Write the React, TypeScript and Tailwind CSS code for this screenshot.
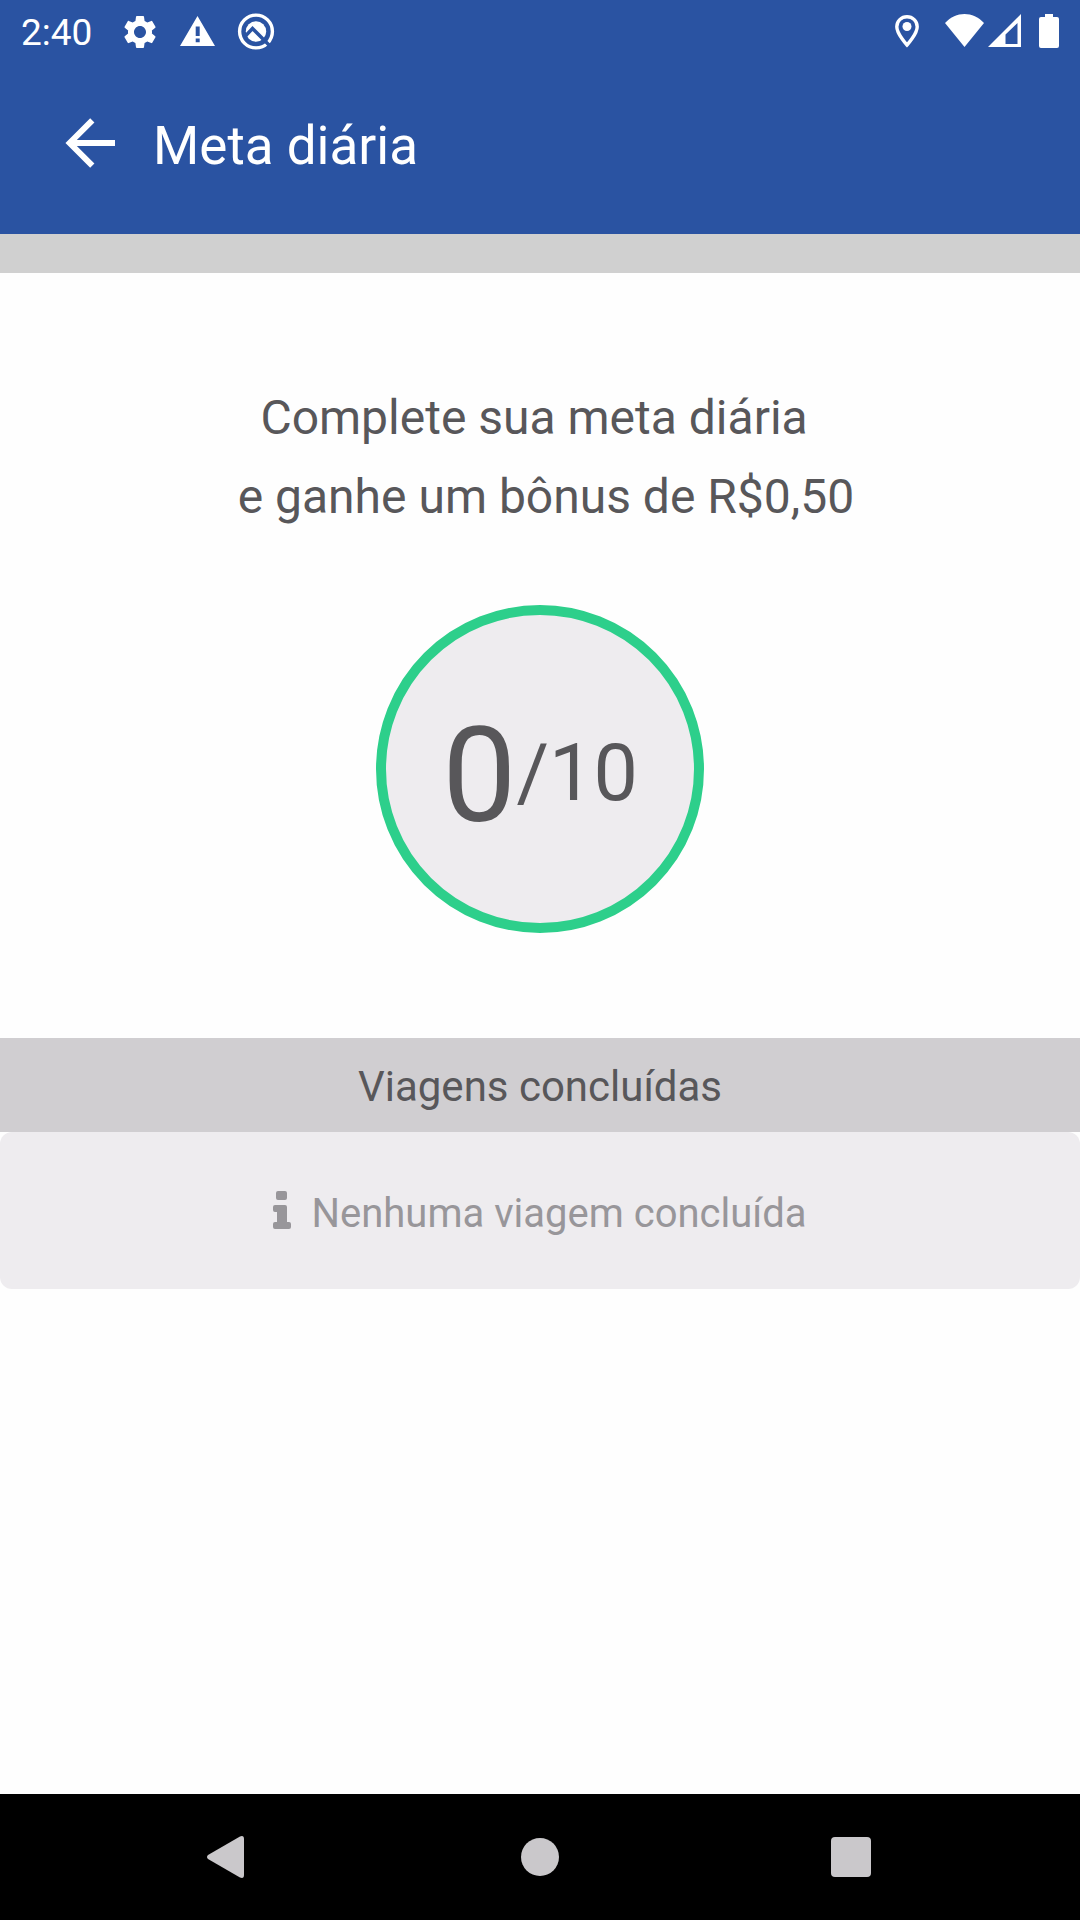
import { MdSettings } from "react-icons/md";

const StatusBar = () => {
  return (
    <div className="flex h-[66px] items-start justify-between text-white">
      <div className="flex items-start">
        <span className="ml-[21px] mt-[11px] w-[99px] text-[37px] leading-[44px]">
          2:40
        </span>
        <MdSettings size={40} className="mt-[12px]" />
        <svg width="35" height="30" viewBox="0 0 35 30" className="ml-[20px] mt-[16px]">
          <path
            d="M17.5 0L35 30H0ZM15.7 10.5V20H19.7V10.5ZM15.7 22.5V26.3H19.7V22.5Z"
            fill="currentColor"
            fillRule="evenodd"
          />
        </svg>

        <svg width="38" height="38" viewBox="0 0 38 38" className="ml-[22px] mt-[13px]">
          <circle
            cx="19"
            cy="18.5"
            r="16.4"
            fill="none"
            stroke="currentColor"
            strokeWidth="3.4"
          />
          <circle cx="19" cy="18.5" r="10.2" fill="currentColor" />
          <path
            d="M7.5 24L15.5 15.5L33.5 33.5"
            fill="none"
            stroke="#2a53a2"
            strokeWidth="3.4"
          />
        </svg>
      </div>

      <div className="flex items-start">
        <svg width="24" height="33" viewBox="0 0 24 33" className="mt-[15px]">
          <path
            d="M12 1.7C6.3 1.7 1.8 6.2 1.8 11.7C1.8 19 12 30 12 30S22.2 19 22.2 11.7C22.2 6.2 17.7 1.7 12 1.7Z"
            fill="none"
            stroke="currentColor"
            strokeWidth="3.4"
          />
          <circle cx="12" cy="11.5" r="4.5" fill="currentColor" />
        </svg>
        <svg width="39" height="33" viewBox="0 0 39 33" className="ml-[26px] mt-[14px]">
          <path d="M0 9C11-3 28-3 39 9L19.5 33Z" fill="currentColor" />
        </svg>
        <svg width="33" height="33" viewBox="0 0 33 33" className="ml-[4px] mt-[14px]">
          <path
            d="M33 0V33H0ZM29.5 9L17.5 20.5V30H29.5Z"
            fill="currentColor"
            fillRule="evenodd"
          />
        </svg>
        <svg width="20" height="34" viewBox="0 0 20 34" className="ml-[18px] mr-[21px] mt-[14px]">
          <path
            d="M6 0H14V3H18Q20 3 20 5V32Q20 34 18 34H2Q0 34 0 32V5Q0 3 2 3H6Z"
            fill="currentColor"
          />
        </svg>
      </div>
    </div>
  );
};

const Header = () => {
  return (
    <header className="h-[234px] bg-[#2a53a2]">
      <StatusBar />
      <div className="flex items-start pl-[64px] pt-[50px] text-white">
        <svg width="51" height="50" viewBox="0 0 51 50" className="mt-[2px]">
          <path
            d="M51 25H6M28.3 2.4L5.7 25L28.3 47.6"
            fill="none"
            stroke="currentColor"
            strokeWidth="6"
          />
        </svg>
        <h1 className="ml-[38px] text-[53px] leading-[60px]">Meta diária</h1>
      </div>
    </header>
  );
};

const GoalProgress = () => {
  return (
    <section className="flex h-[765px] flex-col items-center">
      <p className="whitespace-pre pt-[105px] text-center text-[48px] leading-[79px] text-[#58575a]">
        {"Complete sua meta diária "}
        <br />
        {" e ganhe um bônus de R$0,50"}
      </p>
      <div className="mt-[69px] flex h-[328px] w-[328px] items-center justify-center rounded-full border-[10px] border-[#2dcf8b] bg-[#eeecef] text-[#58575a]">
        <span className="pt-[14px] text-[132px] leading-none">0</span>
        <span className="pt-[8px] text-[79px] leading-none">/10</span>
      </div>
    </section>
  );
};

const CompletedTrips = () => {
  return (
    <section>
      <h2 className="h-[94px] bg-[#d0ced1] pt-[2px] text-center text-[42px] leading-[94px] text-[#58575a]">
        Viagens concluídas
      </h2>
      <div className="flex h-[157px] items-center justify-center rounded-xl bg-[#eeecef] text-[#98969a]">
        <svg width="18" height="39" viewBox="0 0 18 39">
          <path
            d="M5 0H12Q14 0 14 2V7Q14 9 12 9H5Q3 9 3 7V2Q3 0 5 0ZM2 14H12Q14 14 14 16V31H16Q18 31 18 33V36Q18 38 16 38H2Q0 38 0 36V33Q0 31 2 31H4V21H2Q0 21 0 19V16Q0 14 2 14Z"
            fill="currentColor"
          />
        </svg>
        <p className="ml-[21px] mr-px pt-[6px] text-[40px] leading-[48px]">
          Nenhuma viagem concluída
        </p>
      </div>
    </section>
  );
};

const NavigationBar = () => {
  return (
    <nav className="mt-auto flex h-[126px] items-center bg-black pl-[207px] text-[#cac8cb]">
      <svg width="37" height="42" viewBox="0 0 37 42">
        <path
          d="M33 0.5Q37 -1 37 3V39Q37 43 33 41.5L1 23Q-1 21 1 19Z"
          fill="currentColor"
        />
      </svg>
      <div className="ml-[277px] h-[38px] w-[38px] rounded-full bg-[#cac8cb]" />
      <div className="ml-[272px] h-10 w-10 rounded bg-[#cac8cb]" />
    </nav>
  );
};

const App = () => {
  return (
    <div className="flex h-[1920px] w-[1080px] flex-col overflow-hidden bg-[#fefefe] font-[Roboto,sans-serif]">
      <Header />
      <div className="h-[39px] bg-[#d0d0d0]" />
      <GoalProgress />
      <CompletedTrips />
      <NavigationBar />
    </div>
  );
};

export default App;
